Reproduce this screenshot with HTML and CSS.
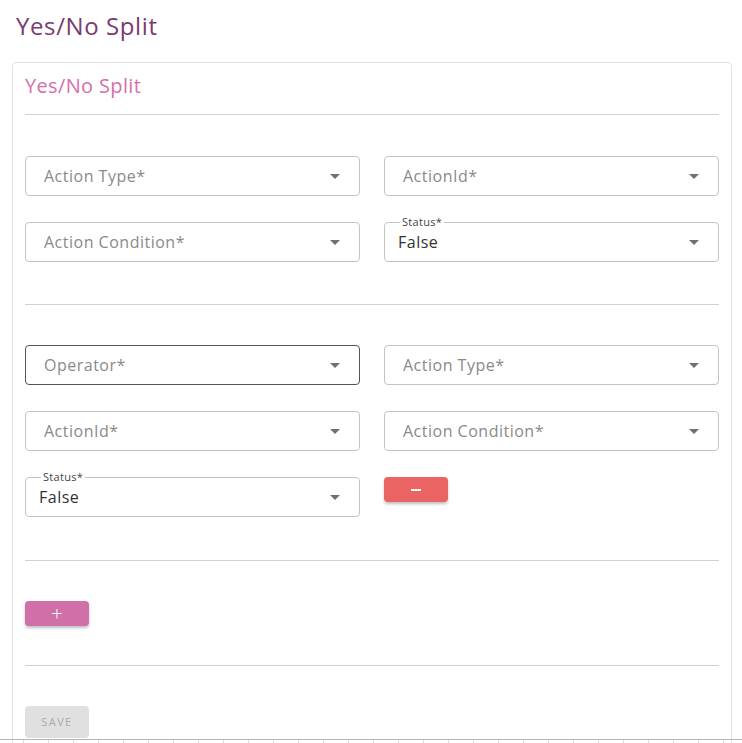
FILE: index.html
```html
<!DOCTYPE html>
<html>
<head>
<meta charset="utf-8">
<link rel="stylesheet" href="styles.css">
</head>
<body>
<h1 class="page-title">Yes/No Split</h1>
<div class="card">
  <h2 class="card-title">Yes/No Split</h2>
  <div class="divider"></div>
  <div class="section s1">
    <div class="grid">
      <div class="field"><span class="ph">Action Type*</span><span class="arrow"></span></div>
      <div class="field"><span class="ph">ActionId*</span><span class="arrow"></span></div>
      <div class="field"><span class="ph">Action Condition*</span><span class="arrow"></span></div>
      <div class="field filled"><span class="flabel">Status*</span><span class="val">False</span><span class="arrow"></span></div>
    </div>
  </div>
  <div class="divider"></div>
  <div class="section s2">
    <div class="grid">
      <div class="field hover"><span class="ph">Operator*</span><span class="arrow"></span></div>
      <div class="field"><span class="ph">Action Type*</span><span class="arrow"></span></div>
      <div class="field"><span class="ph">ActionId*</span><span class="arrow"></span></div>
      <div class="field"><span class="ph">Action Condition*</span><span class="arrow"></span></div>
      <div class="field filled"><span class="flabel">Status*</span><span class="val">False</span><span class="arrow"></span></div>
      <div class="btn-cell"><button class="btn btn-remove"><span class="minus"></span></button></div>
    </div>
  </div>
  <div class="divider"></div>
  <div class="section s3">
    <button class="btn btn-add">+</button>
  </div>
  <div class="divider"></div>
  <div class="section s4">
    <button class="btn btn-save">SAVE</button>
  </div>
</div>
<div class="ruler"></div>
</body>
</html>
```
FILE: styles.css
```css
* { box-sizing: border-box; }
html, body { margin: 0; padding: 0; background: #fff; }
body {
  font-family: "Open Sans", "Noto Sans", sans-serif;
  color: #333;
  height: 743px;
  overflow: hidden;
}
.page-title {
  margin: 0;
  padding: 10px 0 0 16px;
  font-size: 24px;
  line-height: 32px;
  font-weight: 400;
  letter-spacing: 0.6px;
  color: #7b3a70;
  height: 62px;
}
.card {
  margin: 0 10px 0 12px;
  border: 1px solid #e0e0e0;
  border-radius: 4px;
  padding: 0 12px;
  min-height: 700px;
}
.card-title {
  margin: 0;
  padding-top: 9px;
  font-size: 20px;
  line-height: 28px;
  font-weight: 400;
  letter-spacing: 0.35px;
  color: #d46fa8;
  height: 51px;
}
.divider { height: 1px; background: #d0d0d0; }
.section.s1 { padding: 41px 0 42px; }
.section.s2 { padding: 40px 0 43px; }
.section.s3 { padding: 40px 0 39px; }
.section.s4 { padding: 40px 0 0; }
.grid {
  display: grid;
  grid-template-columns: 1fr 1fr;
  column-gap: 24px;
  row-gap: 26px;
}
.field {
  position: relative;
  height: 40px;
  border: 1px solid #c4c4c4;
  border-radius: 4px;
  display: flex;
  align-items: center;
  padding: 0 18px 1px;
  font-size: 16px;
  letter-spacing: 0.5px;
}
.field.hover { border-color: #555; }
.field.filled { padding-left: 13px; }
.ph { color: #8a8a8a; }
.val { color: #333; }
.flabel {
  position: absolute;
  left: 15px;
  top: -8px;
  padding: 0 2px;
  background: #fff;
  font-size: 11px;
  line-height: 14px;
  letter-spacing: 0.3px;
  color: #444;
}
.arrow {
  position: absolute;
  right: 19px;
  top: 17px;
  width: 0; height: 0;
  border-left: 5px solid transparent;
  border-right: 5px solid transparent;
  border-top: 5px solid #707070;
}
.btn-cell { display: flex; align-items: flex-start; }
.btn {
  width: 64px;
  height: 25px;
  border: none;
  border-radius: 4px;
  padding: 0;
  font-family: inherit;
  display: flex;
  align-items: center;
  justify-content: center;
  box-shadow: 0 2px 3px rgba(0,0,0,0.25);
}
.btn-remove { background: #eb6464; }
.minus { width: 10px; height: 2px; background: #fff; display: block; }
.btn-add {
  background: #d070a8;
  color: #fff;
  font-size: 20px;
  font-weight: 300;
  line-height: 1;
}
.btn-save {
  background: #e0e0e0;
  color: #aaaaaa;
  box-shadow: none;
  height: 32px;
  font-size: 11px;
  letter-spacing: 1.4px;
  font-weight: 500;
  padding-bottom: 2px;
}
.ruler {
  position: fixed;
  left: 0; right: 0; bottom: 0;
  height: 4px;
  border-top: 1px solid #b5b5b5;
  background: repeating-linear-gradient(90deg, transparent 0, transparent 23px, #ddd 23px, #ddd 24px, transparent 24px, transparent 25px);
}
```
